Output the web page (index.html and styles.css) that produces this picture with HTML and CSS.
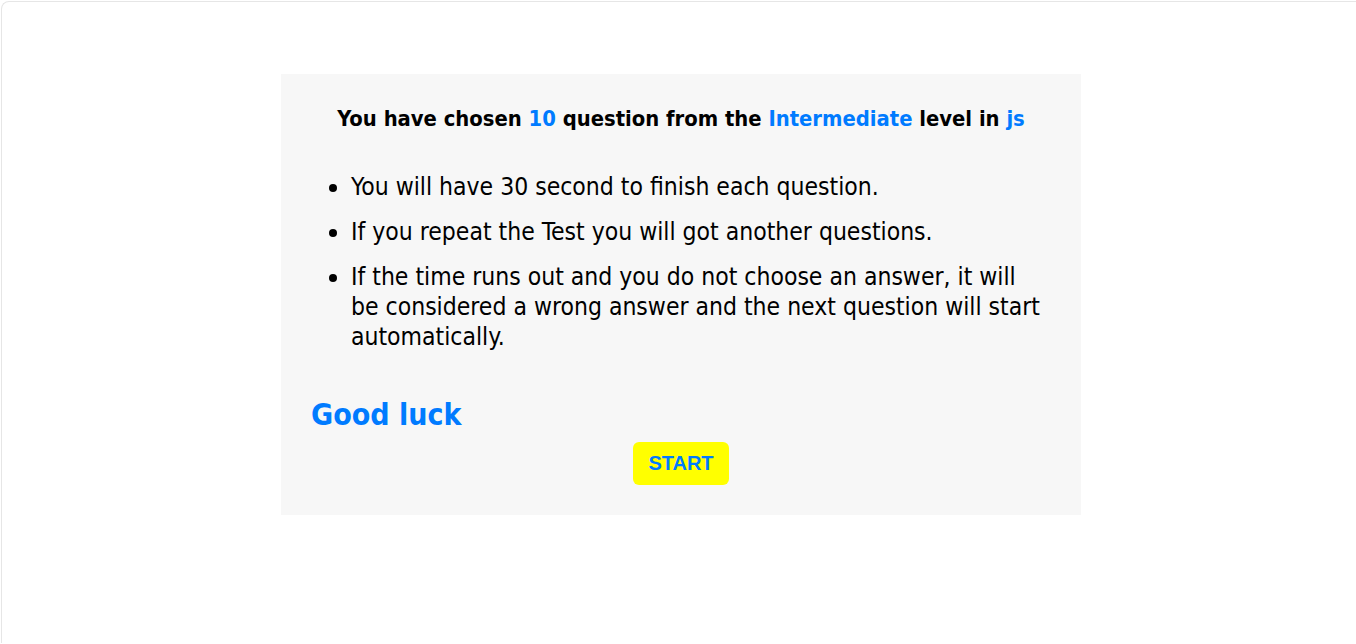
FILE: index.html
```html
<!DOCTYPE html>
<html lang="en">
<head>
<meta charset="utf-8">
<title>Quiz instructions</title>
<link rel="stylesheet" href="styles.css">
</head>
<body>
<div class="frame">
  <section class="card">
    <h3 class="intro">You have chosen <span class="hl">10</span> question from the <span class="hl">Intermediate</span> level in <span class="hl">js</span></h3>
    <ul class="rules">
      <li>You will have 30 second to finish each question.</li>
      <li>If you repeat the Test you will got another questions.</li>
      <li>If the time runs out and you do not choose an answer, it will be considered a wrong answer and the next question will start automatically.</li>
    </ul>
    <h2 class="luck">Good luck</h2>
    <div class="actions">
      <button class="start">START</button>
    </div>
  </section>
</div>
</body>
</html>
```
FILE: styles.css
```css
html, body {
  margin: 0;
  padding: 0;
  background: #ffffff;
  overflow: hidden;
}
body {
  font-family: "DejaVu Sans Condensed", "DejaVu Sans", sans-serif;
  color: #000;
}
.frame {
  margin: 1px 0 0 1px;
  height: calc(100vh - 2px);
  padding-left: 4px;
  border: 1px solid #e6e6e6;
  border-right: none;
  border-bottom: none;
  border-top-left-radius: 8px;
  box-sizing: border-box;
}
.card {
  width: 800px;
  box-sizing: border-box;
  margin: 72px auto 0;
  background: #f7f7f7;
  padding: 30px;
}
.intro {
  margin: 0;
  text-align: center;
  font-size: 21.8px;
  line-height: 26px;
  padding-top: 2px;
  font-weight: bold;
}
.hl {
  color: #007bff;
}
.rules {
  margin: 40px 0 0;
  padding-left: 40px;
  padding-right: 6px;
  font-size: 24.5px;
  line-height: 30px;
}
.rules li {
  margin-bottom: 15px;
}
.rules li:last-child {
  margin-bottom: 0;
}
.luck {
  margin: 45px 0 0;
  font-size: 30px;
  line-height: 36px;
  font-weight: bold;
  color: #007bff;
}
.actions {
  display: flex;
  justify-content: center;
  margin-top: 9px;
}
.start {
  font-family: "Liberation Sans", Arial, sans-serif;
  font-weight: bold;
  font-size: 20px;
  line-height: 23px;
  color: #007bff;
  background: #ffff00;
  border: none;
  border-radius: 6px;
  padding: 10px 15px;
  cursor: pointer;
}
```
